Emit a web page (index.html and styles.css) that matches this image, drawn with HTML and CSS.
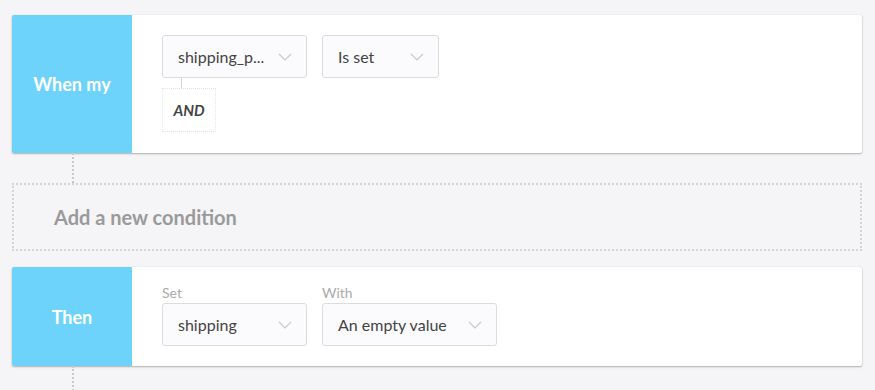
FILE: index.html
```html
<!DOCTYPE html>
<html>
<head>
<meta charset="utf-8">
<link rel="stylesheet" href="styles.css">
</head>
<body>
<div class="page">
  <div class="card">
    <div class="side">When my</div>
    <div class="body body-when">
      <div class="row">
        <div class="select w145"><span>shipping_p...</span><svg class="chev" width="14" height="8" viewBox="0 0 14 8"><path d="M1 1 L7 7 L13 1" fill="none" stroke="#c9c9cc" stroke-width="1.2"/></svg></div>
        <div class="select w117"><span>Is set</span><svg class="chev" width="14" height="8" viewBox="0 0 14 8"><path d="M1 1 L7 7 L13 1" fill="none" stroke="#c9c9cc" stroke-width="1.2"/></svg></div>
      </div>
      <div class="link"></div>
      <div class="and">AND</div>
    </div>
  </div>
  <div class="gap"></div>
  <div class="add">Add a new condition</div>
  <div class="gap-small"></div>
  <div class="card">
    <div class="side">Then</div>
    <div class="body body-then">
      <div class="row">
        <div class="field">
          <div class="label">Set</div>
          <div class="select w145"><span>shipping</span><svg class="chev" width="14" height="8" viewBox="0 0 14 8"><path d="M1 1 L7 7 L13 1" fill="none" stroke="#c9c9cc" stroke-width="1.2"/></svg></div>
        </div>
        <div class="field">
          <div class="label">With</div>
          <div class="select w175"><span>An empty value</span><svg class="chev" width="14" height="8" viewBox="0 0 14 8"><path d="M1 1 L7 7 L13 1" fill="none" stroke="#c9c9cc" stroke-width="1.2"/></svg></div>
        </div>
      </div>
    </div>
  </div>
  <div class="gap tail"></div>
</div>
</body>
</html>
```
FILE: styles.css
```css
html, body {
  margin: 0;
  padding: 0;
  background: #f5f4f6;
  font-family: Lato, "Open Sans", sans-serif;
  height: 100%;
  overflow: hidden;
}
.page {
  padding: 15px 13px 0 12px;
}
.card {
  display: flex;
  background: #fff;
  border-radius: 2px;
  box-shadow: 0 1px 2px rgba(0,0,0,0.28), 0 0 1px rgba(0,0,0,0.15);
  overflow: hidden;
}
.side {
  width: 120px;
  flex: none;
  background: #6dd3fa;
  color: #fff;
  font-weight: 700;
  font-size: 18px;
  display: flex;
  align-items: center;
  justify-content: center;
}
.body {
  flex: 1;
  padding: 20px 30px 21px;
}
.body-then {
  padding-top: 17px;
  padding-bottom: 20px;
}
.row {
  display: flex;
  gap: 15px;
}
.select {
  box-sizing: border-box;
  height: 43px;
  border: 1px solid #dcdbde;
  border-radius: 3px;
  background: #fbfafc;
  display: flex;
  align-items: center;
  justify-content: space-between;
  padding: 0 14px 0 15px;
  font-size: 16px;
  color: #444;
}
.w145 { width: 145px; }
.w117 { width: 117px; }
.w175 { width: 175px; }
.chev { flex: none; }
.link {
  margin-left: 19px;
  width: 1px;
  height: 10px;
  background: #d5d5d8;
}
.and {
  box-sizing: border-box;
  width: 54px;
  height: 44px;
  border: 1px dotted #e4e4e6;
  display: flex;
  align-items: center;
  justify-content: center;
  font-style: italic;
  font-weight: 700;
  font-size: 15px;
  color: #444;
}
.gap {
  height: 30px;
  margin-left: 60px;
  border-left: 2px dotted #c9c9cc;
}
.tail { height: 40px; }
.gap-small { height: 16px; }
.add {
  box-sizing: border-box;
  height: 68px;
  border: 2px dotted #d4d4d7;
  display: flex;
  align-items: center;
  padding-left: 40px;
  font-size: 20px;
  font-weight: 700;
  color: #9a9a9c;
}
.field {
  display: flex;
  flex-direction: column;
}
.label {
  font-size: 14px;
  color: #aaa;
  height: 19px;
}
```
